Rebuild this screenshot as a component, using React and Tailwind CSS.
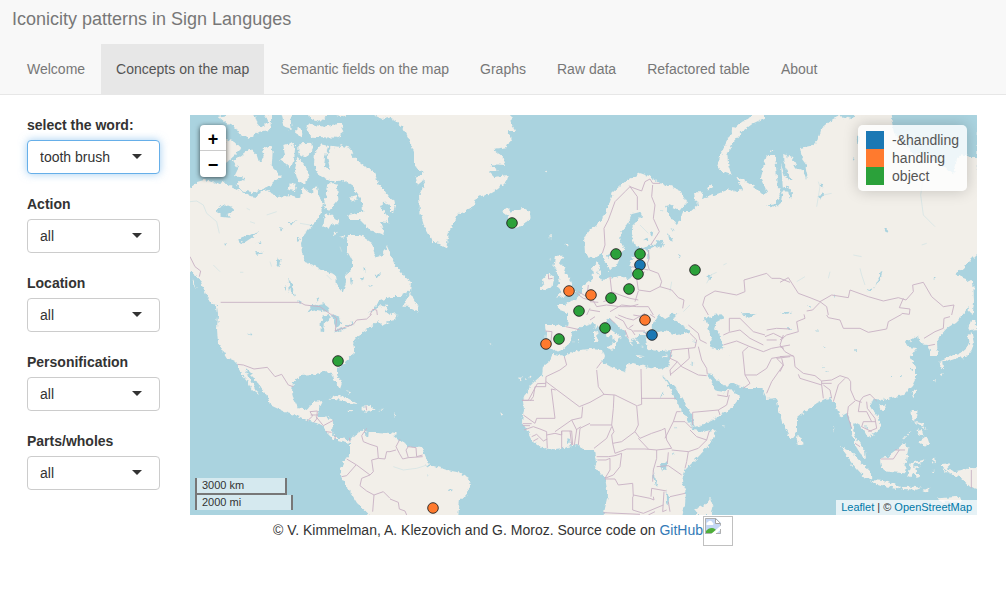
import { useState } from "react";

const tabs = [
  "Welcome",
  "Concepts on the map",
  "Semantic fields on the map",
  "Graphs",
  "Raw data",
  "Refactored table",
  "About",
];

const filters = [
  { id: "word", label: "select the word:", value: "tooth brush", active: true },
  { id: "action", label: "Action", value: "all" },
  { id: "location", label: "Location", value: "all" },
  { id: "personification", label: "Personification", value: "all" },
  { id: "parts", label: "Parts/wholes", value: "all" },
];

const BLUE = "#1b78b4";
const ORANGE = "#ff7a2e";
const GREEN = "#2ba13a";

const markers = [
  [322, 108, GREEN],
  [148, 246, GREEN],
  [426, 139, GREEN],
  [450, 139, GREEN],
  [450, 150, BLUE],
  [448, 159, GREEN],
  [505, 155, GREEN],
  [439, 174, GREEN],
  [421, 183, GREEN],
  [379, 176, ORANGE],
  [401, 180, ORANGE],
  [389, 196, GREEN],
  [455, 205, ORANGE],
  [415, 213, GREEN],
  [462, 220, BLUE],
  [369, 224, GREEN],
  [356, 229, ORANGE],
  [243, 393, ORANGE],
];

// Continents, in map units (787 x 400)
const continents = [
  // The Americas
  "M-5,73 0,72 7,67 14,65 20,66 27,69 33,67 43,72 53,77 60,81 67,82 74,76 80,78 88,82 100,80 110,83 113,72 121,78 127,71 129,82 133,88 131,98 125,108 117,115 111,128 112,138 115,147 127,152 137,157 146,160 147,170 153,177 156,167 155,160 162,154 162,145 157,136 157,128 158,120 170,120 182,128 184,137 187,142 193,140 197,131 200,138 204,148 213,160 221,167 220,176 210,182 200,182 190,186 183,193 178,198 186,195 192,190 198,191 195,196 200,200 206,198 202,204 192,210 188,206 180,213 170,219 163,228 165,238 155,247 147,254 147,260 152,268 150,274 145,267 142,258 133,257 123,260 110,261 103,267 102,277 104,285 108,293 117,295 123,287 133,286 130,292 127,302 135,302 143,305 142,317 145,323 153,323 160,326 165,320 173,315 178,317 187,317 200,318 207,324 220,332 232,333 237,345 240,350 257,355 268,357 278,363 281,370 276,380 270,385 268,402 182,402 167,388 158,373 150,360 153,347 160,338 160,328 152,326 143,324 136,317 132,310 117,305 110,302 97,298 80,290 78,282 70,272 64,262 57,255 55,254 62,267 69,280 62,275 56,264 51,260 48,250 44,246 37,243 28,228 27,214 28,200 27,190 17,182 11,167 5,160 -5,153Z",
  // Greenland
  "M183,-5 184,0 192,4 198,2 206,6 213,12 219,24 224,37 224,51 232,56 235,68 229,80 230,96 234,110 243,127 250,128 256,134 259,117 265,106 268,99 281,94 288,82 299,79 308,74 316,66 318,60 305,62 299,56 308,56 299,49 315,50 312,41 303,34 317,32 321,24 318,16 326,16 322,10 321,-5Z",
  // Eurasia and Africa
  "M787,-5 787,42 780,42 772,39 766,44 763,60 755,53 746,48 737,38 724,40 714,28 704,18 702,8 700,-5 670,-5 662,4 650,1 643,4 636,10 630,15 627,27 620,31 610,33 612,43 617,50 613,56 607,52 602,42 598,40 595,52 602,66 595,62 591,49 593,75 588,73 587,62 585,40 577,40 573,52 571,64 577,78 572,79 566,73 558,68 547,62 553,74 548,78 540,74 527,79 512,84 513,79 505,78 508,90 500,97 493,97 488,108 479,100 475,91 479,90 490,95 497,87 490,75 480,71 470,68 461,62 450,58 437,65 423,77 418,93 413,104 400,115 394,123 395,138 400,143 407,142 412,137 415,147 419,155 427,151 429,143 435,133 430,128 431,117 438,109 442,99 450,97 452,101 443,110 441,120 445,131 453,133 462,130 472,129 460,134 449,136 445,141 440,149 443,158 441,164 430,161 420,163 412,165 407,158 410,150 407,146 402,152 403,162 400,166 392,172 392,177 385,185 380,186 375,190 367,190 370,195 378,198 378,204 377,212 366,210 355,210 356,218 355,230 362,234 366,237 373,234 380,228 382,218 389,214 393,211 402,208 407,210 412,216 425,225 422,232 426,230 427,225 432,223 420,214 415,206 420,202 427,210 435,217 438,225 443,232 441,224 445,223 450,220 457,220 456,226 458,235 472,236 482,235 480,246 478,253 468,254 460,253 450,250 443,248 437,250 435,257 423,253 412,247 414,241 412,235 400,234 390,235 383,237 375,241 363,239 360,246 353,252 352,260 345,266 338,273 333,285 334,295 332,307 337,315 343,327 350,332 358,335 373,333 387,330 394,335 405,335 407,347 405,352 410,358 415,363 418,380 413,402 492,402 495,390 496,377 492,367 495,355 510,340 522,327 526,314 513,317 504,315 498,306 503,312 510,311 528,302 542,293 550,282 545,277 538,273 542,269 555,273 572,273 577,284 586,283 592,307 601,325 607,317 607,303 617,295 627,288 635,284 641,283 645,288 650,302 657,298 661,308 661,318 665,324 665,330 670,338 676,344 675,336 667,325 663,315 665,308 672,312 678,323 690,315 689,303 682,293 680,287 686,284 693,285 713,280 722,271 726,263 726,252 720,243 727,233 718,232 715,227 720,226 727,221 729,228 737,229 740,236 740,241 748,241 747,228 749,222 757,213 765,208 772,201 781,188 782,167 776,164 765,160 775,151 789,137Z",
];

// Islands, drawn on a 600-unit grid for each 200-unit square of the map
const islands = [
  {
    at: "translate(0 0) scale(0.33333)",
    d: "M85,5 110,0 120,-10 190,-10 200,20 215,40 235,20 225,-5 245,0 240,45 205,50 180,70 150,60 135,35 110,25ZM108,72 135,80 155,100 130,125 108,143 90,130ZM128,135 155,120 180,100 200,120 208,145 225,125 218,100 240,92 248,110 245,155 275,185 250,200 235,215 190,232 150,225 140,208 165,190 135,180 145,160ZM280,90 305,82 315,100 313,130 300,160 270,135 285,120ZM325,85 368,83 368,105 348,125 325,118ZM322,125 345,150 357,185 345,205 325,200 315,165ZM275,0 300,-10 305,45 285,40ZM320,35 340,45 335,65 318,55ZM355,25 400,35 455,25 462,50 440,68 365,65 350,45ZM350,-5 420,-5 390,20 365,15ZM440,0 475,-10 470,5ZM385,180 372,150 375,110 395,88 415,92 405,125 402,155 420,165 410,120 425,92 445,95 470,98 490,125 520,150 550,170 565,205 595,245 615,260 612,275 580,260 570,275 590,300 595,325 570,320 585,360 540,345 510,315 478,315 475,300 520,290 515,255 490,215 460,195 430,200 405,190ZM448,90 480,98 488,120 460,118ZM415,205 440,205 445,255 415,290 400,265 410,240ZM400,335 405,295 425,300 452,325 425,325 415,342ZM480,245 498,240 500,255 485,260ZM425,355 440,347 435,360ZM450,365 462,362 460,372ZM300,205 320,210 315,228 295,225ZM210,230 240,225 235,240 215,245ZM50,540 85,560 92,580 65,565ZM8,490 20,520 10,510Z",
  },
  {
    at: "translate(200 0) scale(0.33333)",
    d: "M335,290 350,278 362,290 400,278 420,290 422,310 390,335 370,340 350,325 355,305ZM75,185 100,180 108,190 80,212ZM0,262 15,270 10,290 0,292ZM40,575 62,530 70,550 88,580 85,590 55,575ZM495,425 520,425 510,445 525,460 522,470 540,490 548,510 555,530 530,540 498,548 515,530 500,515 510,500 500,470 490,455ZM455,495 475,475 492,485 488,515 460,528 452,520 460,510ZM478,432 485,430 482,445ZM478,360 485,362 480,372ZM527,388 533,390 529,398ZM464,170 472,166 470,172Z",
  },
  {
    at: "translate(400 0) scale(0.33333)",
    d: "M525,-6 495,-6 460,18 430,40 418,65 405,90 390,125 382,150 395,170 425,180 415,150 412,120 430,80 455,50 490,25 525,8ZM352,215 362,208 368,218 358,226ZM312,232 335,232 330,262 315,255ZM537,102 550,105 545,112ZM438,188 455,193 450,200ZM20,470 32,465 30,480ZM580,110 590,125 600,155 590,160 580,135ZM122,440 130,438 128,445ZM120,425 132,425 126,433Z",
  },
  {
    at: "translate(0 200) scale(0.33333)",
    d: "M418,252 435,243 465,245 500,265 505,270 480,268 465,258 440,252ZM515,275 540,272 555,282 530,290 515,286ZM472,284 488,286 482,290ZM567,285 580,284 578,288ZM472,225 480,232 475,236ZM577,10 600,0 600,20 585,25Z",
  },
  {
    at: "translate(200 200) scale(0.33333)",
    d: "M0,-5 25,0 15,12 0,15ZM560,75 570,70 566,80ZM550,80 555,78 553,84ZM388,190 396,192 390,196ZM405,190 412,192 406,195ZM418,188 426,182 422,192ZM298,88 308,90 302,92ZM330,295 340,298 334,302ZM14,290 18,300 14,310ZM0,352 20,354 18,362 0,362Z",
  },
  {
    at: "translate(400 200) scale(0.33333)",
    d: "M12,50 22,48 22,80 12,82ZM14,25 20,22 20,42 14,40ZM48,92 75,90 68,104 48,98ZM140,120 165,124 145,127ZM215,124 232,118 228,128ZM318,600 320,580 345,570 360,548 370,575 365,600ZM398,334 405,335 402,338ZM152,95 158,96 155,98ZM130,65 150,85 140,88Z",
  },
  {
    at: "translate(590 200) scale(0.33333)",
    d: "M52,360 65,370 68,388 55,392 50,375ZM182,396 215,412 245,445 272,470 274,492 255,488 225,455 200,420ZM275,495 310,498 360,512 355,520 300,510 275,502ZM365,516 400,515 425,518 410,524 365,522ZM430,528 455,516 440,532ZM300,430 325,425 350,405 370,385 385,400 378,440 375,475 335,472 310,468 302,450ZM392,445 440,432 430,440 400,448 398,455 420,452 405,465 420,485 412,488 398,470 395,490 385,485 388,465ZM456,430 462,425 465,445 458,440ZM485,450 510,448 500,460 515,470 545,465 560,458 592,460 592,522 570,515 545,490 525,485 490,460ZM395,285 412,285 412,305 405,320 425,325 440,345 420,330 400,318 395,300ZM415,380 440,362 448,385 435,395 420,382ZM410,345 425,342 430,362 412,355ZM385,355 392,350 370,375 366,376ZM395,235 408,220 408,232 400,250ZM297,272 318,268 312,285 302,284ZM478,140 490,138 492,160 482,158ZM485,135 510,122 540,118 560,100 568,80 565,60 575,55 582,85 575,105 560,125 530,130 500,140ZM565,40 575,10 592,30 592,45 570,48ZM475,550 540,545 545,560 480,560ZM455,468 465,467 460,472ZM490,468 515,475 495,475ZM160,330 163,340 160,350ZM480,178 488,174 484,184ZM462,196 468,192 465,200ZM210,445 218,450 214,456Z",
  },
  {
    at: "translate(590 0) scale(0.33333)",
    d: "M570,500 580,505 582,560 578,600 566,590Z",
  },
];

// Inland water on the same grids
const lakes = [
  {
    at: "translate(0 0) scale(0.33333)",
    d: "M75,285 105,268 135,280 130,290 112,300 120,308 92,305 85,292ZM145,370 175,362 205,348 185,368 160,385 148,380ZM195,412 222,410 200,420ZM262,430 272,435 265,458 260,450ZM295,490 302,500 315,545 300,530ZM282,510 290,520 285,528ZM325,555 335,560 330,570ZM380,548 388,552 382,560ZM352,592 370,570 400,565 418,580 410,590 380,585ZM520,460 530,458 524,470ZM510,490 522,485 516,500ZM555,480 570,478 560,490ZM270,340 280,342 272,350ZM320,368 332,372 322,378ZM535,508 550,512 538,515ZM200,385 215,380 208,390ZM480,490 490,500 482,508ZM296,322 320,318 300,328ZM350,405 356,412 350,415ZM100,385 108,388 102,392Z",
  },
  {
    at: "translate(0 200) scale(0.33333)",
    d: "M392,20 400,5 415,0 425,5 405,20 402,50 392,50ZM425,-5 450,10 455,25 440,40 430,15ZM432,48 465,35 470,40 440,52ZM465,32 488,22 490,28 470,34ZM175,52 184,58 180,62ZM432,200 440,208 437,212ZM525,350 533,350 532,365 526,364Z",
  },
  {
    at: "translate(400 0) scale(0.33333)",
    d: "M200,375 215,378 222,390 212,400 198,392ZM234,358 245,365 248,380 238,375ZM48,418 62,412 64,424 52,428ZM235,285 245,280 262,305 275,300 268,320 260,330 245,310ZM172,402 178,405 176,435 172,430ZM262,420 272,424 268,430ZM160,375 175,365 170,380ZM180,355 190,350 186,368ZM352,485 362,478 358,498ZM210,285 218,288 212,292ZM562,255 572,240 570,210 575,225 600,220 578,230 572,265 560,275 530,272 555,268ZM110,372 120,360 118,385ZM245,340 252,342 248,350Z",
  },
  {
    at: "translate(590 0) scale(0.33333)",
    d: "M258,526 285,515 302,470 308,468 300,495 275,525 262,530ZM0,220 20,215 35,225 36,250 28,250 25,230 0,228ZM115,240 135,235 120,252ZM122,205 130,210 124,222ZM312,340 325,345 320,358ZM218,130 224,132 220,137ZM158,540 166,543 160,548ZM458,486 468,486 462,491ZM230,60 240,70 232,90ZM0,592 40,590 20,597ZM85,572 95,575 88,580ZM40,150 75,150 82,180 78,195 70,165 45,160Z",
  },
  {
    at: "translate(400 200) scale(0.33333)",
    d: "M185,42 186,30 200,5 210,0 225,12 245,5 275,30 300,45 295,55 260,60 225,48 195,52ZM240,-2 262,-5 250,8 235,10ZM345,10 370,0 395,-2 400,10 378,22 372,40 388,50 390,70 398,85 400,102 385,106 365,100 360,85 366,70 355,40ZM228,188 240,205 250,210 270,240 305,300 315,338 300,325 275,288 255,250 240,220 226,195ZM354,175 368,178 385,200 400,210 415,212 425,205 432,212 415,222 405,232 380,228 372,215 358,192ZM210,448 230,442 232,460 215,466ZM190,460 194,480 203,515 198,512 190,488ZM230,525 237,550 236,570 231,560ZM246,408 250,415 248,422ZM256,338 262,342 258,345ZM215,180 225,190 228,200ZM308,142 313,148 308,150ZM217,232 222,235 210,248ZM162,50 180,48 182,54 164,55ZM455,-5 480,-6 500,0 470,5ZM310,72 315,80 312,84ZM418,120 423,122 418,124Z",
  },
  {
    at: "translate(590 200) scale(0.33333)",
    d: "M220,103 230,104 225,109ZM108,46 115,47 112,50ZM126,155 132,157 128,160ZM138,165 146,167 140,170ZM20,40 38,40 28,45ZM130,96 138,97 132,99ZM360,180 366,184 360,187ZM330,182 335,184 330,187ZM255,330 262,336 258,338ZM390,160 400,165 393,168Z",
  },
  {
    at: "translate(200 200) scale(0.33333)",
    d: "M532,370 540,372 538,388 533,385ZM176,525 192,522 182,530ZM112,475 118,480 114,483ZM105,450 125,440 130,445 112,455Z",
  },
];

// Thin streams
const rivers = [
  {
    at: "translate(0 0) scale(0.33333)",
    d: "M0,260 20,258 40,270 50,295 80,320 88,355 M70,450 90,470 M150,472 160,472 M230,300 260,290 M410,480 425,495 M360,330 330,325 M450,395 455,410 M170,280 180,285 M180,320 195,325 M240,440 245,455",
  },
  {
    at: "translate(590 0) scale(0.33333)",
    d: "M430,180 425,220 422,240 430,300 465,335 M425,390 440,385 M240,460 245,480 255,510 M220,420 245,425 M115,200 120,215 110,275 M150,470 145,490 M50,500 75,485 M130,240 155,235",
  },
  {
    at: "translate(400 0) scale(0.33333)",
    d: "M350,505 362,480 380,472 M400,450 410,445 M245,500 240,530 M280,590 300,570 M150,330 175,355",
  },
  {
    at: "translate(200 200) scale(0.33333)",
    d: "M10,455 40,465 80,460 105,452",
  },
];

// National borders on the same grids
const borders = [
  {
    at: "translate(0 0) scale(0.33333)",
    d: "M0,425 15,455 32,468 28,485 M92,562 330,562 345,570 390,575 425,600 M540,600 548,583 560,585 562,600",
  },
  {
    at: "translate(0 200) scale(0.33333)",
    d: "M142,148 160,150 192,162 232,157 255,185 275,178 295,210 310,215 M425,-2 440,10 436,48 470,35 490,28 500,15 530,12 545,-2 M352,318 368,303 360,290 382,288 380,312 372,322 M378,305 400,332 430,316 M408,350 425,352 M435,362 436,372 M478,368 480,380 M530,340 515,362 520,380 540,388 562,395 565,430 545,435 550,470 540,480 500,450 470,432 M455,485 470,482 498,450 M540,480 515,490 510,512 530,528 552,540 548,590 M552,540 580,530 600,550 M565,430 585,432 590,410 600,410 M528,272 530,286 M362,300 384,300",
  },
  {
    at: "translate(200 200) scale(0.33333)",
    d: "M30,372 18,395 28,415 38,432 55,428 48,405 55,395 78,398 80,425 98,420 M55,428 98,425 M0,410 18,405 M0,552 25,562 28,582 45,588 50,600 M466,48 486,50 482,85 M528,35 568,44 M523,125 530,150 510,165 468,185 467,215 435,215 430,245 420,258 M468,205 442,206 415,256 396,256 432,256 M468,200 568,275 600,262 M484,222 495,310 440,310 435,325 400,300 M484,222 497,225 M578,275 575,308 545,315 495,350 M398,326 425,326 M398,332 420,332 M402,345 430,335 450,342 470,350 470,360 495,355 515,360 515,348 545,348 548,390 M470,360 472,400 M425,365 440,358 460,378 472,372 M430,378 445,370 M515,348 515,400 M540,348 545,390 M553,390 560,345 545,315 M565,390 570,340 600,325 M558,345 572,335",
  },
  {
    at: "translate(200 0) scale(0.33333)",
    d: "M475,478 476,492 488,490 M560,535 580,550 600,555 M565,530 590,545 M595,510 592,535 M590,600 600,580",
  },
  {
    at: "translate(400 0) scale(0.33333)",
    d: "M37,415 45,390 42,340 55,315 75,260 105,230 120,215 155,228 165,200 180,192 188,205 210,205 M118,212 142,245 142,285 M188,210 185,245 195,270 190,310 208,350 182,390 M175,405 178,430 172,445 178,465 205,475 215,500 210,515 245,525 265,548 282,555 278,580 M60,485 65,530 M125,455 175,465 M125,475 150,480 165,470 M140,490 145,525 180,530 210,515 M65,530 90,540 120,550 145,555 M0,540 20,575 50,570 90,575 120,575 145,568 M40,560 70,550 M145,528 135,560 M60,590 95,570 140,575 175,575 190,600 M0,560 25,562 M0,585 30,590 M355,600 338,570 345,545 375,528 440,540 465,530 462,495 530,475 545,490 570,490 600,502",
  },
  {
    at: "translate(590 0) scale(0.33333)",
    d: "M0,502 25,488 55,535 90,548 120,560 155,540 205,548 210,525 265,545 310,558 355,548 378,555 400,530 398,510 430,502 455,545 490,575 522,570 515,600 M120,560 140,575 145,600 M120,562 98,585 80,588 M370,550 358,578 390,582 388,598 365,595",
  },
  {
    at: "translate(400 200) scale(0.33333)",
    d: "M0,15 15,5 M60,12 75,25 M75,5 100,18 112,40 125,45 135,60 M85,0 110,10 130,15 165,-5 M105,45 115,70 M130,48 165,48 M118,38 130,30 M130,0 160,5 M180,-2 195,8 M165,50 170,62 M295,30 325,55 330,75 350,85 M300,55 320,75 315,98 245,105 240,130 262,140 275,155 M295,100 298,130 270,155 240,180 M325,95 335,135 350,160 352,178 M275,155 325,180 350,182 M262,140 240,165 242,182 M400,90 440,78 480,95 520,110 545,100 600,90 M418,50 418,10 450,10 490,50 525,60 M400,60 418,52 450,45 480,70 520,90 M530,45 560,40 600,42 M525,65 550,55 580,70 M530,75 560,75 M460,220 480,205 465,180 458,110 475,95 M465,180 500,180 530,160 545,130 575,125 M530,235 545,200 580,150 560,130 600,125 M20,165 25,215 42,238 75,240 140,272 145,330 M35,140 20,160 M153,162 155,268 142,272 M153,250 258,250 M0,262 42,238 M72,240 70,280 65,330 72,350 65,360 M0,330 65,330 M12,400 50,370 65,335 M65,360 68,385 95,380 135,350 145,330 M135,350 150,370 185,355 215,345 225,340 230,375 245,400 200,405 165,402 110,402 75,415 68,385 M145,370 175,402 M225,370 250,320 260,290 272,290 M250,320 285,320 305,340 M300,345 320,365 350,375 358,348 M350,375 325,400 295,410 245,405 M295,410 290,440 285,460 M308,292 385,285 410,270 418,240 M385,285 390,300 M308,292 308,330 M382,240 412,245 415,225 M20,425 55,425 75,422 M22,435 48,435 60,430 60,465 45,490 M75,422 95,415 90,455 70,480 45,490 M45,492 75,492 85,510 128,505 130,545 M130,540 180,550 192,555 190,545 M128,545 128,585 160,595 220,570 M200,405 200,430 190,465 188,500 M200,455 235,452 275,480 M185,520 183,545 M185,520 230,528 M240,545 285,535 M235,560 240,590 M222,530 218,590 230,585 M40,593 150,598 M235,412 232,445 M195,590 175,600",
  },
  {
    at: "translate(590 200) scale(0.33333)",
    d: "M140,0 145,8 180,15 190,40 240,40 265,52 320,42 325,20 365,-2 M0,75 20,60 55,50 50,20 75,10 72,-2 M10,60 0,90 15,110 42,125 45,155 70,175 105,182 125,198 155,195 180,182 205,190 212,200 212,225 225,255 245,262 M55,178 60,190 125,210 125,198 M125,205 155,205 M125,210 130,250 M130,210 150,225 155,250 M195,190 175,210 160,260 M225,258 205,275 202,300 215,340 M240,258 235,290 260,290 275,320 M240,258 250,245 270,238 290,258 M260,260 262,280 285,310 290,340 265,350 M245,335 250,320 285,320 M245,335 275,350 M225,385 240,395 M302,432 340,432 358,405 M345,405 375,405 M574,465 574,520 M432,70 465,50 490,40 492,10 510,5 M445,92 465,88 M0,95 12,100 M0,125 40,122 M0,170 10,150 5,130",
  },
];

function LayerPaths({ layers, ...rest }) {
  return (
    <g {...rest}>
      {layers.map((layer) => (
        <path key={layer.at + layer.d.slice(0, 12)} transform={layer.at} d={layer.d} />
      ))}
    </g>
  );
}

function WorldMap() {
  return (
    <svg
      className="block h-full w-full"
      viewBox="0 0 787 400"
      preserveAspectRatio="xMidYMid slice"
      role="img"
      aria-label="World map with sign language locations"
    >
      <defs>
        <filter id="coast" x="0" y="0" width="787" height="400" filterUnits="userSpaceOnUse" colorInterpolationFilters="sRGB">
          <feTurbulence type="fractalNoise" baseFrequency="0.25" numOctaves="3" seed="4" />
          <feDisplacementMap in="SourceGraphic" scale="5" xChannelSelector="R" yChannelSelector="G" />
        </filter>
      </defs>
      <rect width="787" height="400" fill="#aad3df" />
      <g filter="url(#coast)">
        <g fill="#f2efe9">
          {continents.map((d) => (
            <path key={d.slice(0, 12)} d={d} />
          ))}
        </g>
        <LayerPaths layers={islands} fill="#f2efe9" />
        <LayerPaths layers={lakes} fill="#aad3df" />
      </g>
      <LayerPaths layers={rivers} fill="none" stroke="#cfe2e4" strokeWidth="2" />
      <LayerPaths layers={borders} fill="none" stroke="#c9b3c5" strokeWidth="2.8" strokeLinejoin="round" />
      <g stroke="#222" strokeWidth="0.9">
        {markers.map(([x, y, fill]) => (
          <circle key={`${x}-${y}`} cx={x} cy={y} r="5.3" fill={fill} />
        ))}
      </g>
    </svg>
  );
}

function Filter({ id, label, value, active }) {
  return (
    <div className="flex flex-col gap-[5px]">
      <label htmlFor={id} className="font-bold leading-5">
        {label}
      </label>
      <div className="relative">
        <select
          id={id}
          defaultValue={value}
          className={
            "block h-[34px] w-full appearance-none rounded border bg-white pl-3 pr-8 text-[14px] leading-5 text-[#333] outline-none " +
            (active
              ? "border-[#66afe9] shadow-[0_0_8px_rgba(102,175,233,0.6)]"
              : "border-[#ccc]")
          }
        >
          <option>{value}</option>
        </select>
        <svg
          className="pointer-events-none absolute right-[18px] top-[14px] h-[5px] w-[10px]"
          viewBox="0 0 10 5"
          aria-hidden="true"
        >
          <path d="M0 0h10L5 5z" fill="#333" />
        </svg>
      </div>
    </div>
  );
}

function BrokenImage() {
  return (
    <svg className="size-[30px] shrink-0" viewBox="0 0 30 30" role="img" aria-label="Missing picture">
      <rect x="0.5" y="0.5" width="29" height="29" fill="#fff" stroke="#c0c0c0" />
      <path d="M2 2h11l5 5v11H2z" fill="#c4d7f5" />
      <path d="M3.500 8.500a2 2 0 0 1 1.500-2.500 2.500 2.500 0 0 1 4.500.5A1.500 1.500 0 0 1 10 9H3.500z" fill="#fff" />
      <path d="M2.500 17.500v-2c2-2.500 4-3.500 6.500-3.500 2 0 4 1.500 5 3l-4 2.500z" fill="#4fae3a" />
      <path d="M7.500 18.500l10.500-9v4l-6 5z" fill="#fff" />
      <path d="M12.500 2.500v5h5z" fill="#fff" stroke="#a3a3a3" />
      <path d="M8 17.500H2.500v-15h10l5 5v2M17.500 13v4.500h-4.500" fill="none" stroke="#b0b0b0" />
    </svg>
  );
}

export default function App() {
  const [tab, setTab] = useState("Concepts on the map");
  return (
    <div className="bg-white font-['Liberation_Sans',Arial,sans-serif] text-[14px] leading-5 text-[#333]">
      <header className="border-b border-[#e7e7e7] bg-[#f8f8f8] px-3">
        <div className="flex h-11 items-start pt-[9px]">
          <a href="#home" className="text-[18px] leading-5 text-[#777]">
            Iconicity patterns in Sign Languges
          </a>
        </div>
        <nav className="flex flex-wrap gap-x-px">
          {tabs.map((name) => (
            <a
              key={name}
              href={"#" + name.toLowerCase().replaceAll(" ", "-")}
              onClick={() => setTab(name)}
              className={
                "px-[15px] py-[15px] " +
                (name === tab ? "bg-[#e7e7e7] text-[#555]" : "text-[#777]")
              }
            >
              {name}
            </a>
          ))}
        </nav>
      </header>

      <main className="flex gap-[30px] pl-[27px] pr-[29px] pt-5">
        <form className="flex w-[133px] shrink-0 flex-col gap-5">
          {filters.map((f) => (
            <Filter key={f.id} {...f} />
          ))}
        </form>

        <section className="relative h-[400px] min-w-0 flex-1 overflow-hidden bg-[#aad3df]">
          <WorldMap />

          <div className="absolute left-[10px] top-[10px] flex w-[26px] flex-col overflow-hidden rounded bg-white text-[18px] font-bold leading-[28px] text-black shadow-[0_1px_5px_rgba(0,0,0,0.65)]">
            <button type="button" aria-label="Zoom in" className="h-[26px] border-b border-[#ccc]">
              +
            </button>
            <button type="button" aria-label="Zoom out" className="h-[26px]">
              −
            </button>
          </div>

          <ul className="absolute right-[10px] top-[10px] rounded-[5px] bg-white/80 px-2 py-1.5 leading-[18px] text-[#555] shadow-[0_0_15px_rgba(0,0,0,0.2)]">
            <li className="flex gap-2">
              <span className="size-[18px] bg-[#1b78b4]" />
              -&amp;handling
            </li>
            <li className="flex gap-2">
              <span className="size-[18px] bg-[#ff7a2e]" />
              handling
            </li>
            <li className="flex gap-2">
              <span className="size-[18px] bg-[#2ba13a]" />
              object
            </li>
          </ul>

          <div className="absolute bottom-[5px] left-[5px] flex flex-col text-[11px] leading-[15px]">
            <div className="h-[17px] w-[92px] border-2 border-t-0 border-[#777] bg-white/50 px-[5px]">
              3000 km
            </div>
            <div className="h-[15px] w-[98px] border-x-2 border-[#777] bg-white/50 px-[5px]">
              2000 mi
            </div>
          </div>

          <div className="absolute bottom-0 right-0 bg-white/70 px-[5px] text-[11px] leading-[15px]">
            <a href="https://leafletjs.com" className="text-[#0078a8]">
              Leaflet
            </a>{" "}
            | ©{" "}
            <a href="https://openstreetmap.org" className="text-[#0078a8]">
              OpenStreetMap
            </a>
          </div>
        </section>
      </main>

      <footer className="flex items-start justify-center pt-px">
        <p className="pt-1">
          © V. Kimmelman, A. Klezovich and G. Moroz. Source code on{" "}
          <a href="https://github.com" className="text-[#337ab7]">
            GitHub
          </a>
        </p>
        <BrokenImage />
      </footer>
    </div>
  );
}
